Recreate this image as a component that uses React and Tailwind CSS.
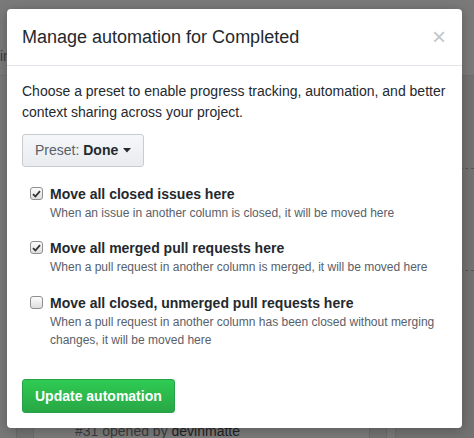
import React from "react";

function Check({ checked }) {
  return (
    <span
      className={`mt-[3px] flex h-[13px] w-[13px] shrink-0 items-center justify-center rounded-[3px] border border-[#8f8f8f] bg-gradient-to-b from-[#fcfcfc] to-[#dedede]`}
    >
      {checked && (
        <svg width="9" height="8" viewBox="0 0 9 8">
          <path d="M1 4.2 L3.4 6.5 L8 1.2" fill="none" stroke="#333" strokeWidth="1.8" />
        </svg>
      )}
    </span>
  );
}

function Option({ checked, title, desc }) {
  return (
    <div className="flex gap-[7px] pl-[8px]">
      <Check checked={checked} />
      <div>
        <div className="text-[14px] font-bold leading-[20px] text-[#24292e]">{title}</div>
        <div className="text-[12px] leading-[18px] text-[#586069]">{desc}</div>
      </div>
    </div>
  );
}

export default function App() {
  return (
    <div
      className="relative h-[438px] w-[474px] overflow-hidden bg-[#787878]"
      style={{ fontFamily: '"Liberation Sans", Arial, sans-serif' }}
    >
      {/* dimmed page behind */}
      <div className="flex h-full flex-col">
        <div className="h-[76px] border-b border-[#6f6f6f] bg-[#7a7a7a] pt-[46px] text-[14px] text-[#3a3a3a]">
          <span>in</span>
        </div>
        <div className="flex flex-1 gap-[8px] pl-[16px]">
          <div className="flex w-[371px] flex-col border-x border-[#6a6a6a] bg-[#727272] pt-[75px]">
            <div className="flex-1" />
            <div className="mx-[16px] h-[24px] rounded-t-[3px] border-x border-t border-[#6a6a6a] bg-[#7a7a7a] pl-[41px] pt-[6px] text-[14px] text-[#3a3a3a]">
              #31 opened by <span className="text-[#222]">devinmatte</span>
            </div>
          </div>
          <div className="flex flex-1 flex-col border-l border-[#6a6a6a] bg-[#727272]">
            <div className="mt-[92px] ml-[58px] border-t border-dashed border-[#555]" />
            <div className="mt-[101px] ml-[58px] border-t border-dashed border-[#555]" />
          </div>
        </div>
      </div>

      {/* modal */}
      <div className="absolute left-[7px] top-[9px] w-[455px] rounded-[4px] bg-white text-[#24292e] shadow-[0_2px_12px_rgba(0,0,0,0.25)]">
        <div className="flex h-[57px] items-center justify-between border-b border-[#e1e4e8] pl-[15px] pr-[16px]">
          <h2 className="text-[18px] font-normal leading-[26px] text-[#24292e]">Manage automation for Completed</h2>
          <span className="text-[24px] leading-none text-[#c3c6ca]">×</span>
        </div>
        <div className="px-[15px] pt-[15px] pb-[15px]">
          <p className="text-[14px] leading-[21px] text-[#24292e]">
            Choose a preset to enable progress tracking, automation, and better context sharing across your project.
          </p>
          <button className="mt-[11px] flex h-[33px] items-center rounded-[3px] border border-[#c8cbcf] bg-gradient-to-b from-[#f5f7f9] to-[#e9ecef] px-[12px] text-[14px] text-[#586069]">
            Preset:&nbsp;<b className="text-[#24292e]">Done</b>
            <svg className="ml-[5px]" width="8" height="5" viewBox="0 0 8 5">
              <path d="M0 0 L8 0 L4 4.5 Z" fill="#24292e" />
            </svg>
          </button>
          <div className="mt-[17px] flex flex-col gap-[16px]">
            <Option
              checked
              title="Move all closed issues here"
              desc="When an issue in another column is closed, it will be moved here"
            />
            <Option
              checked
              title="Move all merged pull requests here"
              desc="When a pull request in another column is merged, it will be moved here"
            />
            <div className="pt-[1px]">
              <Option
                title="Move all closed, unmerged pull requests here"
                desc="When a pull request in another column has been closed without merging changes, it will be moved here"
              />
            </div>
          </div>
          <button className="mt-[30px] h-[34px] rounded-[3px] border border-[#26a148] bg-gradient-to-b from-[#2fcb53] to-[#28a745] px-[12px] text-[14px] font-bold text-white">
            Update automation
          </button>
        </div>
      </div>
    </div>
  );
}
